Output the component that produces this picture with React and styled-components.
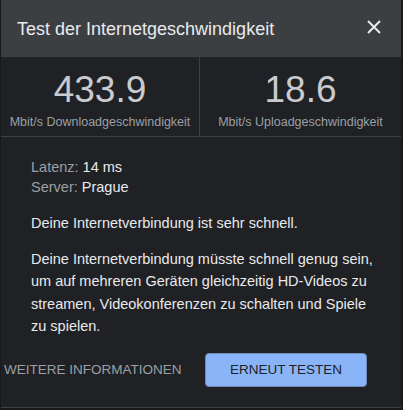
import React from "react";
import styled, { createGlobalStyle } from "styled-components";

const GlobalStyle = createGlobalStyle`
  html, body {
    margin: 0;
    padding: 0;
    background: #17181a;
  }
  body {
    font-family: "Liberation Sans", Arial, sans-serif;
  }
`;

const Dialog = styled.div`
  width: 400px;
  height: 407px;
  margin-left: 1px;
  background: #202124;
  border-bottom: 1px solid #3c4043;
  display: flex;
  flex-direction: column;
`;

const Header = styled.div`
  height: 57px;
  background: #3c3f42;
  display: flex;
  align-items: center;
  padding: 0 19px 4px 16px;
  box-sizing: border-box;
  justify-content: space-between;
`;

const Title = styled.h1`
  margin: 0;
  font-size: 18px;
  font-weight: normal;
  color: #e8eaed;
  padding-top: 6px;
`;

const CloseButton = styled.button`
  background: none;
  border: none;
  padding: 0;
  width: 16px;
  height: 16px;
  margin-top: 1px;
  color: #e8eaed;
  display: flex;
  cursor: pointer;
`;

const Stats = styled.div`
  display: grid;
  grid-template-columns: 199px 1fr;
  height: 79px;
  border-bottom: 1px solid #3c4043;
`;

const Stat = styled.div`
  display: flex;
  flex-direction: column;
  align-items: center;
  padding-top: 13px;
  box-sizing: border-box;
  border-right: ${(p) => (p.divider ? "1px solid #3c4043" : "none")};
`;

const Value = styled.div`
  font-size: 37px;
  line-height: 40px;
  color: #c9cbce;
`;

const Unit = styled.div`
  font-size: 12.5px;
  line-height: 16px;
  color: #9aa0a6;
  margin-top: 4px;
`;

const Info = styled.div`
  padding: 20px 28px 0 30px;
`;

const Meta = styled.div`
  font-size: 14.5px;
  line-height: 20px;
  color: #e8eaed;
`;

const MetaLabel = styled.span`
  color: #9aa0a6;
`;

const Text = styled.p`
  margin: ${(p) => (p.first ? "15px 0 0" : "13px 0 0")};
  font-size: 14.5px;
  line-height: 22.5px;
  color: #e8eaed;
`;

const Footer = styled.div`
  display: flex;
  align-items: center;
  margin-top: 15px;
  padding: 0 34px 0 3px;
`;

const LinkButton = styled.button`
  background: none;
  border: none;
  padding: 0;
  font-family: inherit;
  font-size: 13.5px;
  color: #9aa0a6;
  cursor: pointer;
`;

const PrimaryButton = styled.button`
  margin-left: auto;
  width: 162px;
  height: 34px;
  border: 1px solid #6f89b8;
  border-radius: 4px;
  background: #8ab4f8;
  color: #202124;
  font-family: inherit;
  font-size: 13.5px;
  cursor: pointer;
`;

function App() {
  return (
    <>
      <GlobalStyle />
      <Dialog>
        <Header>
          <Title>Test der Internetgeschwindigkeit</Title>
          <CloseButton aria-label="Schließen">
            <svg width="16" height="16" viewBox="0 0 16 16">
              <path d="M2 2 L14 14 M14 2 L2 14" stroke="currentColor" strokeWidth="2" />
            </svg>
          </CloseButton>
        </Header>
        <Stats>
          <Stat divider>
            <Value>433.9</Value>
            <Unit>Mbit/s Downloadgeschwindigkeit</Unit>
          </Stat>
          <Stat>
            <Value>18.6</Value>
            <Unit>Mbit/s Uploadgeschwindigkeit</Unit>
          </Stat>
        </Stats>
        <Info>
          <Meta>
            <MetaLabel>Latenz:</MetaLabel> 14 ms
          </Meta>
          <Meta>
            <MetaLabel>Server:</MetaLabel> Prague
          </Meta>
          <Text first>Deine Internetverbindung ist sehr schnell.</Text>
          <Text>
            Deine Internetverbindung müsste schnell genug sein, um auf mehreren Geräten
            gleichzeitig HD-Videos zu streamen, Videokonferenzen zu schalten und Spiele
            zu spielen.
          </Text>
        </Info>
        <Footer>
          <LinkButton>WEITERE INFORMATIONEN</LinkButton>
          <PrimaryButton>ERNEUT TESTEN</PrimaryButton>
        </Footer>
      </Dialog>
    </>
  );
}

export default App;
